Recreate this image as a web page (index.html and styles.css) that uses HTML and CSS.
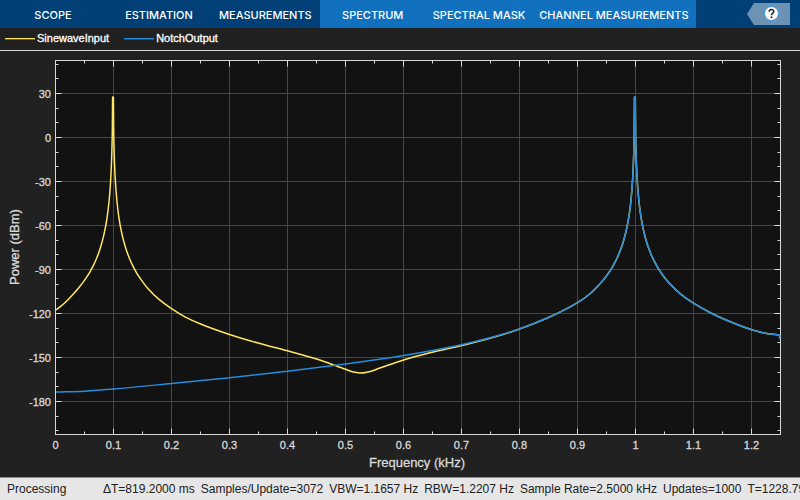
FILE: index.html
```html
<!DOCTYPE html>
<html lang="en">
<head>
<meta charset="utf-8">
<title>Spectrum Analyzer</title>
<link rel="stylesheet" href="styles.css">
</head>
<body>
<header class="toolstrip">
  <nav class="tabs" aria-label="Main tabs">
    <button class="tab" type="button">SCOPE</button>
    <button class="tab" type="button">ESTIMATION</button>
    <button class="tab" type="button">MEASUREMENTS</button>
  </nav>
  <nav class="tabs tabs-context" aria-label="Contextual tabs">
    <button class="tab" type="button">SPECTRUM</button>
    <button class="tab" type="button">SPECTRAL MASK</button>
    <button class="tab" type="button">CHANNEL MEASUREMENTS</button>
  </nav>
  <button class="help" type="button" aria-label="Help">
    <svg width="43" height="22" viewBox="0 0 43 22">
      <path d="M0 11L7 0H43V22H7Z" fill="#6d92b3"/>
      <circle cx="24.500" cy="10.500" r="7" fill="#fff" stroke="#2e96e0" stroke-width="1"/>
      <path d="M22.200 8.800C22.200 5.900 26.800 5.900 26.800 8.500C26.800 10.200 24.500 10.200 24.500 12.200" fill="none" stroke="#222" stroke-width="1.500"/>
      <circle cx="24.500" cy="14.200" r="1" fill="#222"/>
    </svg>
  </button>
</header>
<main class="scope">
  <ul class="legend">
    <li class="series series-input">SinewaveInput</li>
    <li class="series series-output">NotchOutput</li>
  </ul>
  <svg id="plot" class="plot" viewBox="0 51 800 426" role="img">
    <rect class="area" x="55.5" y="60.5" width="725" height="374"/>
    <path id="grid" class="grid"/>
    <path id="ticks" class="ticks"/>
    <rect class="frame" x="55.5" y="60.5" width="725" height="374"/>
    <path id="input" class="trace trace-input"/>
    <path id="output" class="trace trace-output"/>
    <g id="labels" class="labels"></g>
    <text class="title" x="417" y="467" text-anchor="middle">Frequency (kHz)</text>
    <text class="title" transform="translate(19 247) rotate(-90)" text-anchor="middle">Power (dBm)</text>
  </svg>
</main>
<footer class="status">
  <span class="state">Processing</span>
  <span>ΔT=819.2000 ms</span>
  <span>Samples/Update=3072</span>
  <span>VBW=1.1657 Hz</span>
  <span>RBW=1.2207 Hz</span>
  <span>Sample Rate=2.5000 kHz</span>
  <span>Updates=1000</span>
  <span>T=1228.79</span>
</footer>
<script src="plot.js"></script>
</body>
</html>
```
FILE: styles.css
```css
* { box-sizing: border-box; }
body {
  margin: 0;
  min-height: 100vh;
  display: flex;
  flex-direction: column;
  background: #212121;
  color: #fff;
  font-family: "Liberation Sans", Arial, sans-serif;
  overflow-x: hidden;
}
button { border: 0; background: none; color: inherit; }
.toolstrip { display: flex; height: 28px; background: #004076; }
.tabs { display: flex; padding-right: 1px; }
.tabs-context { background: #1171be; }
.tab {
  min-width: 106px;
  padding: 2px 7px 0;
  font: 500 11px "Inter", sans-serif;
  white-space: nowrap;
}
.help { margin: 3px 10px 0 auto; padding: 0; height: 22px; }
.help svg { display: block; }
.scope { flex: 1; display: flex; flex-direction: column; min-height: 0; }
.legend {
  display: flex;
  gap: 15px;
  height: 23px;
  margin: 0;
  padding: 0 5px 2px;
  border-bottom: 1px solid #d9d9d9;
  list-style: none;
  font-size: 11px;
  -webkit-text-stroke: 0.3px #fff;
}
.series { display: flex; align-items: center; gap: 2px; }
.series::before { content: ""; width: 30px; height: 2px; margin-top: 2px; }
.series-input::before { background: linear-gradient(#ffe664 50%, #6b6238 50%); }
.series-output::before { background: linear-gradient(#268cdd 50%, #235073 50%); }
.plot { display: block; width: 100%; flex: 1; min-height: 0; }
.area { fill: #121212; }
.grid { stroke: #464646; }
.ticks { stroke: #d9d9d9; }
.frame { fill: none; stroke: #d9d9d9; }
.trace { fill: none; stroke-width: 1.5px; stroke-linejoin: bevel; }
.trace-input { stroke: #ffe664; }
.trace-output { stroke: #268cdd; }
.labels { fill: #d9d9d9; font-size: 11px; stroke: #d9d9d9; stroke-width: 0.3px; }
.title { fill: #d9d9d9; font-size: 13px; stroke: #d9d9d9; stroke-width: 0.3px; }
.status {
  display: flex;
  align-items: center;
  gap: 6px;
  height: 23px;
  padding-left: 7px;
  border-top: 1px solid #8c8c8c;
  background: #e6e6e6;
  color: #212121;
  font-size: 12px;
  white-space: nowrap;
  overflow: hidden;
}
.status span { flex: none; }
.status .state { width: 90px; }
```
FILE: plot.js
```js
const LEFT = 55.5, RIGHT = 780.5, TOP = 60.5, BOTTOM = 434.5;
const STEP_X = 58, STEP_Y = 44, Y30 = 93.5;
let grid = '', ticks = '';
const labels = document.getElementById('labels');

function label(text, x, y, anchor) {
  const t = document.createElementNS('http://www.w3.org/2000/svg', 'text');
  t.setAttribute('x', x);
  t.setAttribute('y', y);
  t.setAttribute('text-anchor', anchor);
  t.textContent = text;
  labels.appendChild(t);
}
const tickX = (x, n) => { ticks += `M${x} ${TOP}v${n}M${x} ${BOTTOM}v${-n}`; };
const tickY = (y, n) => { ticks += `M${LEFT} ${y}h${n}M${RIGHT} ${y}h${-n}`; };

for (let i = 0; i <= 12; i++) {
  const x = LEFT + i * STEP_X;
  if (i) { grid += `M${x} ${TOP}V${BOTTOM}`; tickX(x, 6); }
  if (x + 29 < RIGHT - 1) tickX(x + 29, 3);
  label(String(i / 10), x, 449, 'middle');
}
for (let i = 0; i < 8; i++) {
  const y = Y30 + i * STEP_Y;
  grid += `M${LEFT} ${y}H${RIGHT}`;
  tickY(y, 6);
  label(String(30 - i * 30), 51, y + 4, 'end');
}
for (let i = -1; i < 8; i++) {
  tickY(Y30 + i * STEP_Y + 15, 3);
  tickY(Y30 + i * STEP_Y + 29, 3);
}
document.getElementById('grid').setAttribute('d', grid);
document.getElementById('ticks').setAttribute('d', ticks);

// Logarithmic skirts on both sides of a tone, in plot coordinates.
function peak(x, k) {
  const d = [34, 30, 26, 23, 20, 17, 14, 12, 9.5, 7.5, 6, 5, 4, 3, 2.5, 2, 1.5, 1.2, 0.9, 0.7];
  const y = v => 183 + k * Math.log(v / 2.5);
  return [...d.map(v => [x - v, y(v)]), [x - 0.4, 97], [x + 0.4, 97],
    ...d.reverse().map(v => [x + v, y(v)])];
}

// Monotone cubic interpolation with spacing-weighted tangents.
function curve(p) {
  const n = p.length, h = [], s = [], m = [];
  for (let i = 0; i < n - 1; i++) {
    h[i] = p[i + 1][0] - p[i][0];
    s[i] = (p[i + 1][1] - p[i][1]) / h[i];
  }
  for (let i = 0; i < n; i++) {
    if (i === 0) m[i] = s[0];
    else if (i === n - 1) m[i] = s[n - 2];
    else if (s[i - 1] * s[i] <= 0) m[i] = 0;
    else {
      const a = 2 * h[i] + h[i - 1], b = h[i] + 2 * h[i - 1];
      m[i] = (a + b) / (a / s[i - 1] + b / s[i]);
    }
  }
  let d = `M${p[0]}`;
  for (let i = 0; i < n - 1; i++) {
    const t = h[i] / 3;
    if (p[i][1] === 97 || p[i + 1][1] === 97) d += `L${p[i + 1]}`;
    else d += `C${p[i][0] + t} ${p[i][1] + t * m[i]} ${p[i + 1][0] - t} ${p[i + 1][1] - t * m[i + 1]} ${p[i + 1]}`;
  }
  return d;
}

const shared = [[519.5, 329], [549, 317.3], [577.5, 302.7], [590, 293.7],
  ...peak(634.9, 38.2), [681, 294.3], [693.5, 303.2], [710, 312.5],
  [726.7, 320.3], [751.7, 329.7], [766.7, 333.5], [779.5, 335]];
const input = [[56, 310], [62, 305.3], [72, 295.4], ...peak(113, 40),
  [159, 299.4], [171.5, 308.6], [185, 316.8], [200, 323.8], [229.5, 334.5],
  [258, 343], [287.5, 350.8], [322, 360.7], [345.5, 369.3], [353, 371.9], [360.5, 373],
  [368, 372], [380, 368], [403.5, 360], [430, 352.8], [461.5, 345.5], [490, 338.3], ...shared];
const output = [[56, 392], [84.5, 391.2], [113.5, 389], [171.5, 383.5], [229.5, 377.7], [287.5, 371.3],
  [345.5, 364], [403.5, 355.5], [461.5, 344.7], [490, 337.8], ...shared];

document.getElementById('input').setAttribute('d', curve(input));
document.getElementById('output').setAttribute('d', curve(output) + 'V339');
```
